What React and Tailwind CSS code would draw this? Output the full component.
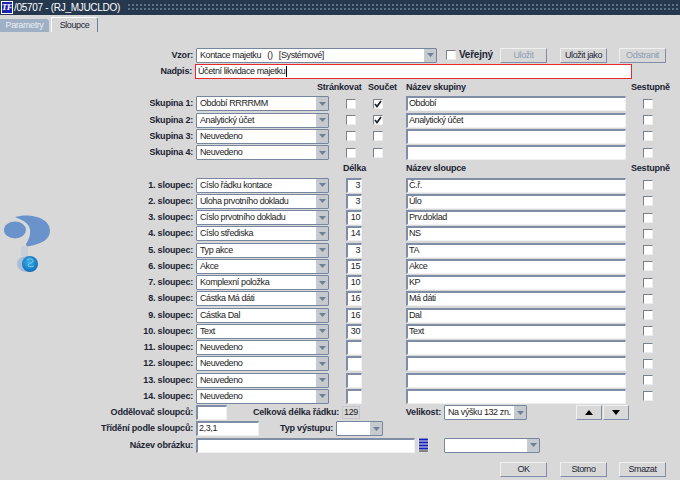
const groups = [
  ["Skupina 1:", "Období RRRRMM", true, "Období"],
  ["Skupina 2:", "Analytický účet", true, "Analytický účet"],
  ["Skupina 3:", "Neuvedeno", false, ""],
  ["Skupina 4:", "Neuvedeno", false, ""],
];

const columns = [
  ["Číslo řádku kontace", "3", "Č.ř."],
  ["Úloha prvotního dokladu", "3", "Úlo"],
  ["Číslo prvotního dokladu", "10", "Prv.doklad"],
  ["Číslo střediska", "14", "NS"],
  ["Typ akce", "3", "TA"],
  ["Akce", "15", "Akce"],
  ["Komplexní položka", "10", "KP"],
  ["Částka Má dáti", "16", "Má dáti"],
  ["Částka Dal", "16", "Dal"],
  ["Text", "30", "Text"],
  ["Neuvedeno", "", ""],
  ["Neuvedeno", "", ""],
  ["Neuvedeno", "", ""],
  ["Neuvedeno", "", ""],
];

function Row({ children }) {
  return <div className="flex h-[16.25px] items-center">{children}</div>;
}

function Label({ children, className = "w-[144px]" }) {
  return (
    <div className={`${className} shrink-0 whitespace-nowrap pr-[3px] text-right font-bold tracking-[-0.2px] text-[#1b2433]`}>
      {children}
    </div>
  );
}

function Heading({ children, className }) {
  return (
    <div className={`${className} shrink-0 whitespace-nowrap font-bold tracking-[-0.2px] text-[#1b2433]`}>
      {children}
    </div>
  );
}

function Select({ value, className }) {
  return (
    <div className={`${className} flex h-[15px] shrink-0 items-center rounded-[1px] border border-[#76869f] bg-white`}>
      <div className="flex-1 truncate whitespace-pre pl-[3px] text-[#222]">{value}</div>
      <div className="flex h-full w-[12px] items-center justify-center border-l border-[#c4ccd6] bg-[#c6c9ce]">
        <svg width="7" height="4" viewBox="0 0 7 4">
          <path d="M0 0h7L3.5 4z" fill="#6f8096" />
        </svg>
      </div>
    </div>
  );
}

function Input({ value, className, align = "text-left" }) {
  return (
    <div
      className={`${className} ${align} h-[15px] shrink-0 overflow-hidden whitespace-nowrap border-t-2 border-l-2 border-r border-b border-t-[#7f8da6] border-l-[#7f8da6] border-r-[#eef0f2] border-b-[#eef0f2] bg-white px-[1px] leading-[11px] text-[#222]`}
    >
      {value}
    </div>
  );
}

function Check({ checked, className = "" }) {
  return (
    <div className={`${className} flex h-[10px] w-[10px] shrink-0 items-center justify-center border border-t-[#77808c] border-l-[#77808c] border-r-[#eeeeee] border-b-[#eeeeee] bg-white`}>
      {checked && (
        <svg width="8" height="8" viewBox="0 0 8 8">
          <path d="M1 4l2 2.5L7 1" fill="none" stroke="#1c2430" strokeWidth="1.7" />
        </svg>
      )}
    </div>
  );
}

function Button({ children, disabled, className = "w-[47px]" }) {
  return (
    <div
      className={`${className} flex h-[15px] shrink-0 items-center justify-center border border-t-[#f0f0f0] border-l-[#f0f0f0] border-r-[#7f8da6] border-b-[#7f8da6] bg-[#d8d8d8] ${
        disabled ? "text-[#8d9db3]" : "text-[#1b2433]"
      }`}
    >
      {children}
    </div>
  );
}

function HelpIcon() {
  return (
    <svg width="48" height="60" viewBox="0 0 48 60">
      <defs>
        <filter id="soft">
          <feGaussianBlur stdDeviation="0.7" />
        </filter>
        <radialGradient id="globe" cx="0.45" cy="0.4" r="0.6">
          <stop offset="0" stopColor="#3fb0e6" />
          <stop offset="1" stopColor="#0f6fb8" />
        </radialGradient>
      </defs>
      <g filter="url(#soft)">
        <path d="M13 3C25 -1 48 2 48 17C48 26 38 30 28 32C25 33 24 32 24 30C28 24 30 16 26 11C22 6 17 5 13 3Z" fill="#6a93cb" />
        <ellipse cx="13" cy="16" rx="11" ry="8.5" fill="#6a93cb" />
        <path d="M19 32h7v10h-7z" fill="#c8cfd8" />
        <ellipse cx="25" cy="50" rx="10" ry="8" fill="#a9bdd8" />
      </g>
      <circle cx="28" cy="50" r="8" fill="url(#globe)" />
      <path d="M25 46c3-2 6-1 6 1s-4 2-5 4 3 2 6 1" fill="none" stroke="#7fd0f0" strokeWidth="1" />
    </svg>
  );
}

export default function App() {
  return (
    <div className="flex h-[480px] w-[680px] flex-col overflow-hidden bg-[#d8d8d8] font-['Liberation_Sans',sans-serif] text-[9px] leading-none tracking-[-0.4px]">
      <div className="flex h-[15px] shrink-0 items-center bg-[#25384e]">
        <div className="ml-[1px] flex h-[13px] w-[12px] items-center justify-center border border-white bg-[#1c22b0] font-['Liberation_Serif',serif] text-[9px] font-bold italic text-white">
          TF
        </div>
        <div className="ml-[1px] whitespace-nowrap text-[10px] tracking-[-0.3px] text-white">/05707 - (RJ_MJUCLDO)</div>
        <div className="ml-[7px] mr-[1px] h-[9px] flex-1 bg-[radial-gradient(circle,#5f7288_0.7px,transparent_0.9px)] bg-[length:4px_4px]" />
      </div>

      <div className="flex h-[17px] shrink-0 items-end">
        <div className="flex h-[13px] w-[49px] items-center justify-center rounded-tr-[3px] bg-[#9fb0c6] text-[#e8edf2]">
          Parametry
        </div>
        <div className="ml-[2px] flex h-[15px] w-[47px] items-center justify-center rounded-tr-[3px] border-l border-t border-r border-l-white border-t-white border-r-[#6f7f96] text-[#1b2433]">
          Sloupce
        </div>
      </div>

      <div className="flex pt-[15px]">
        <div className="flex w-[52px] shrink-0 items-center justify-center pb-[36px]">
          <HelpIcon />
        </div>
        <div className="flex-1">
          <Row>
            <Label>Vzor:</Label>
            <Select value="Kontace majetku   ()   [Systémové]" className="w-[241px]" />
            <Check className="ml-[9px]" />
            <div className="ml-[3px] w-[41px] shrink-0 text-[10px] font-bold tracking-[-0.25px] text-[#1b2433]">Veřejný</div>
            <Button disabled>Uložit</Button>
            <Button className="ml-[13px] w-[47px]">Uložit jako</Button>
            <Button disabled className="ml-[12px] w-[47px]">Odstranit</Button>
          </Row>
          <Row>
            <Label className="w-[143px]">Nadpis:</Label>
            <div className="flex h-[15px] w-[437px] shrink-0 items-center border border-[#e8282c] bg-white pl-[2px] text-[#222]">
              Účetní likvidace majetku
              <span className="ml-[0.5px] h-[11px] w-[1px] bg-black" />
            </div>
          </Row>

          <Row>
            <Heading className="ml-[265px] w-[46px]">Stránkovat</Heading>
            <Heading className="ml-[5px] w-[29px]">Součet</Heading>
            <Heading className="ml-[9px] w-[225px]">Název skupiny</Heading>
            <Heading className="w-[40px]">Sestupně</Heading>
          </Row>
          {groups.map(([label, value, sum, name]) => (
            <Row key={label}>
              <Label>{label}</Label>
              <Select value={value} className="w-[133px]" />
              <Check className="ml-[17px]" />
              <Check checked={sum} className="ml-[17px]" />
              <Input value={name} className="ml-[23px] w-[220px]" />
              <Check className="ml-[17px]" />
            </Row>
          ))}

          <Row>
            <Heading className="ml-[291px] w-[24px]">Délka</Heading>
            <Heading className="ml-[39px] w-[225px]">Název sloupce</Heading>
            <Heading className="w-[40px]">Sestupně</Heading>
          </Row>
          {columns.map(([value, len, name], i) => (
            <Row key={i}>
              <Label>{i + 1}. sloupec:</Label>
              <Select value={value} className="w-[133px]" />
              <Input value={len} align="text-right" className="ml-[17px] w-[16px]" />
              <Input value={name} className="ml-[44px] w-[220px]" />
              <Check className="ml-[17px]" />
            </Row>
          ))}

          <Row>
            <Label>Oddělovač sloupců:</Label>
            <Input className="w-[31px]" />
            <Label className="w-[115px]">Celková délka řádku:</Label>
            <div className="flex h-[13px] w-[18px] shrink-0 items-center justify-center border border-[#c4c8ce] text-[#222]">129</div>
            <Label className="w-[84px]">Velikost:</Label>
            <Select value="Na výšku 132 zn." className="w-[83px]" />
            <Button className="ml-[49px] w-[26px]">
              <svg width="8" height="5" viewBox="0 0 8 5"><path d="M4 0l4 5H0z" fill="#000" /></svg>
            </Button>
            <Button className="ml-[1px] w-[26px]">
              <svg width="8" height="5" viewBox="0 0 8 5"><path d="M0 0h8L4 5z" fill="#000" /></svg>
            </Button>
          </Row>
          <Row>
            <Label>Třídění podle sloupců:</Label>
            <Input value="2,3,1" className="w-[63px]" />
            <Label className="w-[77px]">Typ výstupu:</Label>
            <Select className="w-[47px]" />
          </Row>
          <Row>
            <Label>Název obrázku:</Label>
            <Input className="w-[219px]" />
            <svg className="ml-[3px] shrink-0" width="11" height="14" viewBox="0 0 11 14">
              <rect width="11" height="14" fill="#e8e8e8" />
              <path d="M1 1.5h9M1 4.5h9M1 7.5h9M1 10.5h9" stroke="#1420b8" strokeWidth="2" />
              <path d="M1 13h9" stroke="#222" />
            </svg>
            <Select className="ml-[15px] w-[96px]" />
          </Row>

          <div className="flex pt-[9px]">
            <div className="w-[448px] shrink-0" />
            <Button>OK</Button>
            <Button className="ml-[13px] w-[47px]">Storno</Button>
            <Button className="ml-[12px] w-[47px]">Smazat</Button>
          </div>
        </div>
      </div>
    </div>
  );
}
